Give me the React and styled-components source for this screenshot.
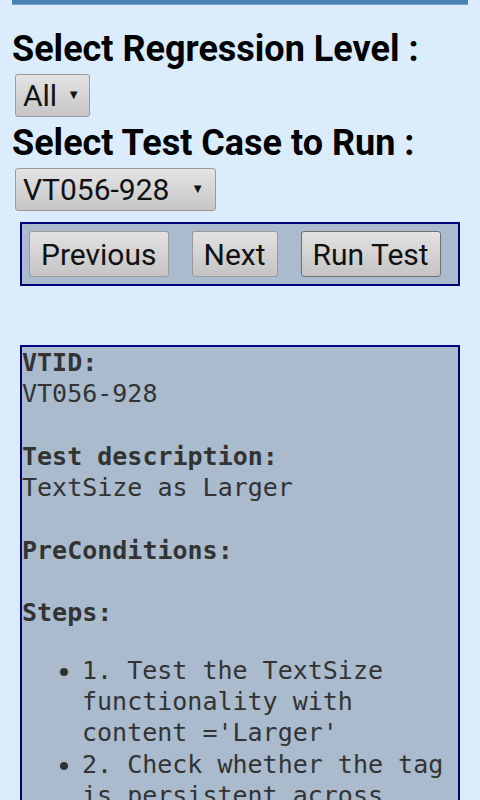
import styled, { createGlobalStyle } from "styled-components";
import { useState } from "react";

const GlobalStyle = createGlobalStyle`
  html, body {
    margin: 0;
    padding: 0;
    background: #dbecfd;
  }
  body {
    font-family: Roboto, "Liberation Sans", sans-serif;
    overflow: hidden;
  }
`;

const Page = styled.div`
  padding: 0 12px;
  min-height: 800px;
  background: #dbecfd;
`;

const TopBar = styled.div`
  height: 4px;
  background: #4682b4;
  border-bottom: 1px solid #7aa7cf;
  margin-bottom: 24px;
`;

const Heading = styled.h3`
  margin: 6px 0 5px;
  font-family: Roboto, "Liberation Sans", sans-serif;
  font-weight: 700;
  font-size: 36px;
  line-height: 40px;
  color: #000;
`;

const SelectWrap = styled.div`
  position: relative;
  display: inline-block;
  margin-left: 3px;
  width: ${(p) => p.$width}px;

  &::after {
    content: "▼";
    position: absolute;
    right: ${(p) => p.$arrowRight}px;
    top: 50%;
    transform: translateY(-60%);
    font-size: 13px;
    color: #111;
    pointer-events: none;
  }
`;

const Select = styled.select`
  appearance: none;
  -webkit-appearance: none;
  display: block;
  width: 100%;
  height: 43px;
  padding: 0 0 0 7px;
  border: 1px solid #9a9a9a;
  border-radius: 3px;
  background: linear-gradient(#e4e4e4, #c6c6c6);
  font-family: Roboto, "Liberation Sans", sans-serif;
  font-size: 30px;
  color: #111;
  outline: none;
`;

const ButtonPanel = styled.div`
  display: flex;
  gap: 23px;
  margin: 11px 8px 0;
  padding: 7px;
  border: 2px solid #000080;
  background: #a9bbcd;
`;

const Button = styled.button`
  height: 46px;
  padding: 0 11px;
  border: 1px solid ${(p) => (p.$dark ? "#707070" : "#9a9a9a")};
  border-radius: 3px;
  background: linear-gradient(#e2e2e2, #c4c4c4);
  font-family: Roboto, "Liberation Sans", sans-serif;
  font-size: 30px;
  color: #111;
  cursor: pointer;
`;

const Details = styled.div`
  margin: 59px 8px 0;
  border: 2px solid #000080;
  border-bottom: none;
  background: #a9bbcd;
  font-family: "DejaVu Sans Mono", "Liberation Mono", monospace;
  font-size: 25px;
  line-height: 31.3px;
  color: #333;
  white-space: pre-wrap;
  min-height: 460px;
`;

const Label = styled.b`
  font-weight: 700;
`;

const Steps = styled.ul`
  margin: 26px 0 0;
  padding-left: 60px;
`;

const levels = ["All", "1", "2", "3"];
const cases = ["VT056-927", "VT056-928", "VT056-929"];

export default function App() {
  const [level, setLevel] = useState("All");
  const [testCase, setTestCase] = useState("VT056-928");

  return (
    <Page>
      <GlobalStyle />
      <TopBar />
      <Heading>Select Regression Level :</Heading>
      <SelectWrap $width={75} $arrowRight={10}>
        <Select value={level} onChange={(e) => setLevel(e.target.value)}>
          {levels.map((l) => (
            <option key={l}>{l}</option>
          ))}
        </Select>
      </SelectWrap>
      <Heading>Select Test Case to Run :</Heading>
      <SelectWrap $width={201} $arrowRight={12}>
        <Select value={testCase} onChange={(e) => setTestCase(e.target.value)}>
          {cases.map((c) => (
            <option key={c}>{c}</option>
          ))}
        </Select>
      </SelectWrap>
      <ButtonPanel>
        <Button>Previous</Button>
        <Button>Next</Button>
        <Button $dark>Run Test</Button>
      </ButtonPanel>
      <Details>
        <Label>VTID:</Label>
        {"\n"}VT056-928{"\n\n"}
        <Label>Test description:</Label>
        {"\n"}TextSize as Larger{"\n\n"}
        <Label>PreConditions:</Label>
        {"\n\n"}
        <Label>Steps:</Label>
        <Steps>
          <li>1. Test the TextSize functionality with content ='Larger'</li>
          <li>2. Check whether the tag is persistent across sessions</li>
        </Steps>
      </Details>
    </Page>
  );
}
